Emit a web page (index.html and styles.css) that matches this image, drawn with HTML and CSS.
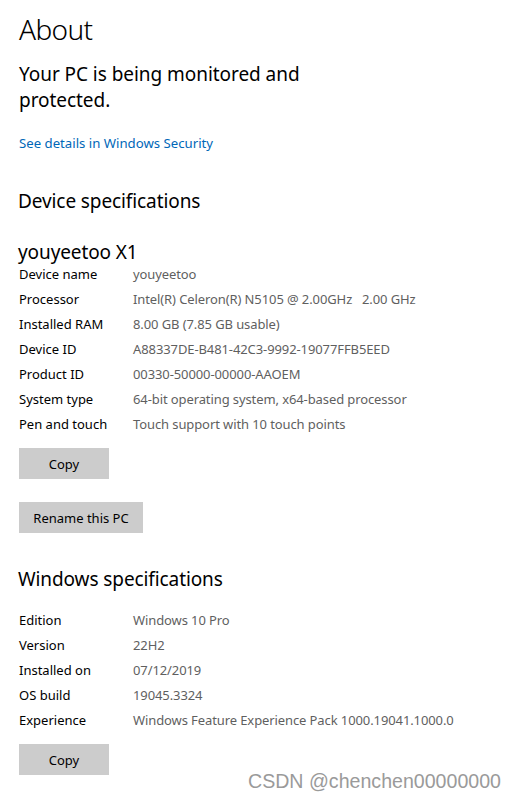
FILE: index.html
```html
<!DOCTYPE html>
<html>
<head>
<meta charset="utf-8">
<link rel="stylesheet" href="styles.css">
</head>
<body>
<div class="page">
  <h1 class="title">About</h1>
  <p class="status">Your PC is being monitored and<br>protected.</p>
  <a class="link" href="#">See details in Windows Security</a>

  <h2 class="section">Device specifications</h2>
  <h3 class="device">youyeetoo X1</h3>
  <div class="specs">
    <div class="label">Device name</div><div class="value">youyeetoo</div>
    <div class="label">Processor</div><div class="value">Intel(R) Celeron(R) N5105 @ 2.00GHz&nbsp;&nbsp;&nbsp;2.00 GHz</div>
    <div class="label">Installed RAM</div><div class="value">8.00 GB (7.85 GB usable)</div>
    <div class="label">Device ID</div><div class="value">A88337DE-B481-42C3-9992-19077FFB5EED</div>
    <div class="label">Product ID</div><div class="value">00330-50000-00000-AAOEM</div>
    <div class="label">System type</div><div class="value">64-bit operating system, x64-based processor</div>
    <div class="label">Pen and touch</div><div class="value">Touch support with 10 touch points</div>
  </div>
  <button class="btn btn-copy">Copy</button>
  <button class="btn btn-rename">Rename this PC</button>

  <h2 class="section section-win">Windows specifications</h2>
  <div class="specs specs-win">
    <div class="label">Edition</div><div class="value">Windows 10 Pro</div>
    <div class="label">Version</div><div class="value">22H2</div>
    <div class="label">Installed on</div><div class="value">07/12/2019</div>
    <div class="label">OS build</div><div class="value">19045.3324</div>
    <div class="label">Experience</div><div class="value">Windows Feature Experience Pack 1000.19041.1000.0</div>
  </div>
  <button class="btn btn-copy">Copy</button>
</div>
<div class="watermark">CSDN @chenchen00000000</div>
</body>
</html>
```

FILE: styles.css
```css
html, body {
  margin: 0;
  padding: 0;
  background: #ffffff;
}
body {
  font-family: "Noto Sans", "Open Sans", sans-serif;
  color: #000000;
  width: 517px;
  height: 798px;
  overflow: hidden;
  position: relative;
}
.page {
  display: flex;
  flex-direction: column;
  align-items: flex-start;
  padding: 9px 0 0 19px;
}
.title {
  margin: 0;
  font-size: 28px;
  line-height: 40px;
  font-weight: 300;
  letter-spacing: -0.6px;
}
.status {
  margin: 12px 0 0;
  font-size: 19px;
  line-height: 26px;
  font-weight: 400;
  letter-spacing: -0.05px;
}
.link {
  margin-top: 20px;
  font-size: 13.2px;
  line-height: 20px;
  color: #0067b8;
  text-decoration: none;
}
.section {
  margin: 34px 0 0 -1px;
  font-size: 19px;
  line-height: 28px;
  font-weight: 400;
  letter-spacing: -0.1px;
}
.device {
  margin: 26px 0 0 -1px;
  font-size: 19px;
  line-height: 22px;
  font-weight: 400;
  letter-spacing: -0.1px;
}
.specs {
  display: grid;
  grid-template-columns: 114px auto;
  grid-auto-rows: 25px;
  font-size: 13px;
  line-height: 25px;
  margin-top: -1px;
}
.label {
  color: #000000;
}
.value {
  color: #5f5f5f;
  letter-spacing: -0.1px;
}
.btn {
  font-family: inherit;
  font-size: 13px;
  background: #cccccc;
  border: none;
  color: #000000;
  height: 31px;
  padding: 0;
  margin: 0;
}
.btn-copy {
  width: 90px;
  margin-top: 11px;
}
.btn-rename {
  width: 124px;
  margin-top: 23px;
}
.section-win {
  margin-top: 32px;
}
.specs-win {
  margin-top: 15px;
}
.watermark {
  position: absolute;
  left: 248px;
  top: 768px;
  font-family: "Liberation Sans", Arial, sans-serif;
  font-size: 19.6px;
  line-height: 26px;
  color: #9a9a9a;
}
```
